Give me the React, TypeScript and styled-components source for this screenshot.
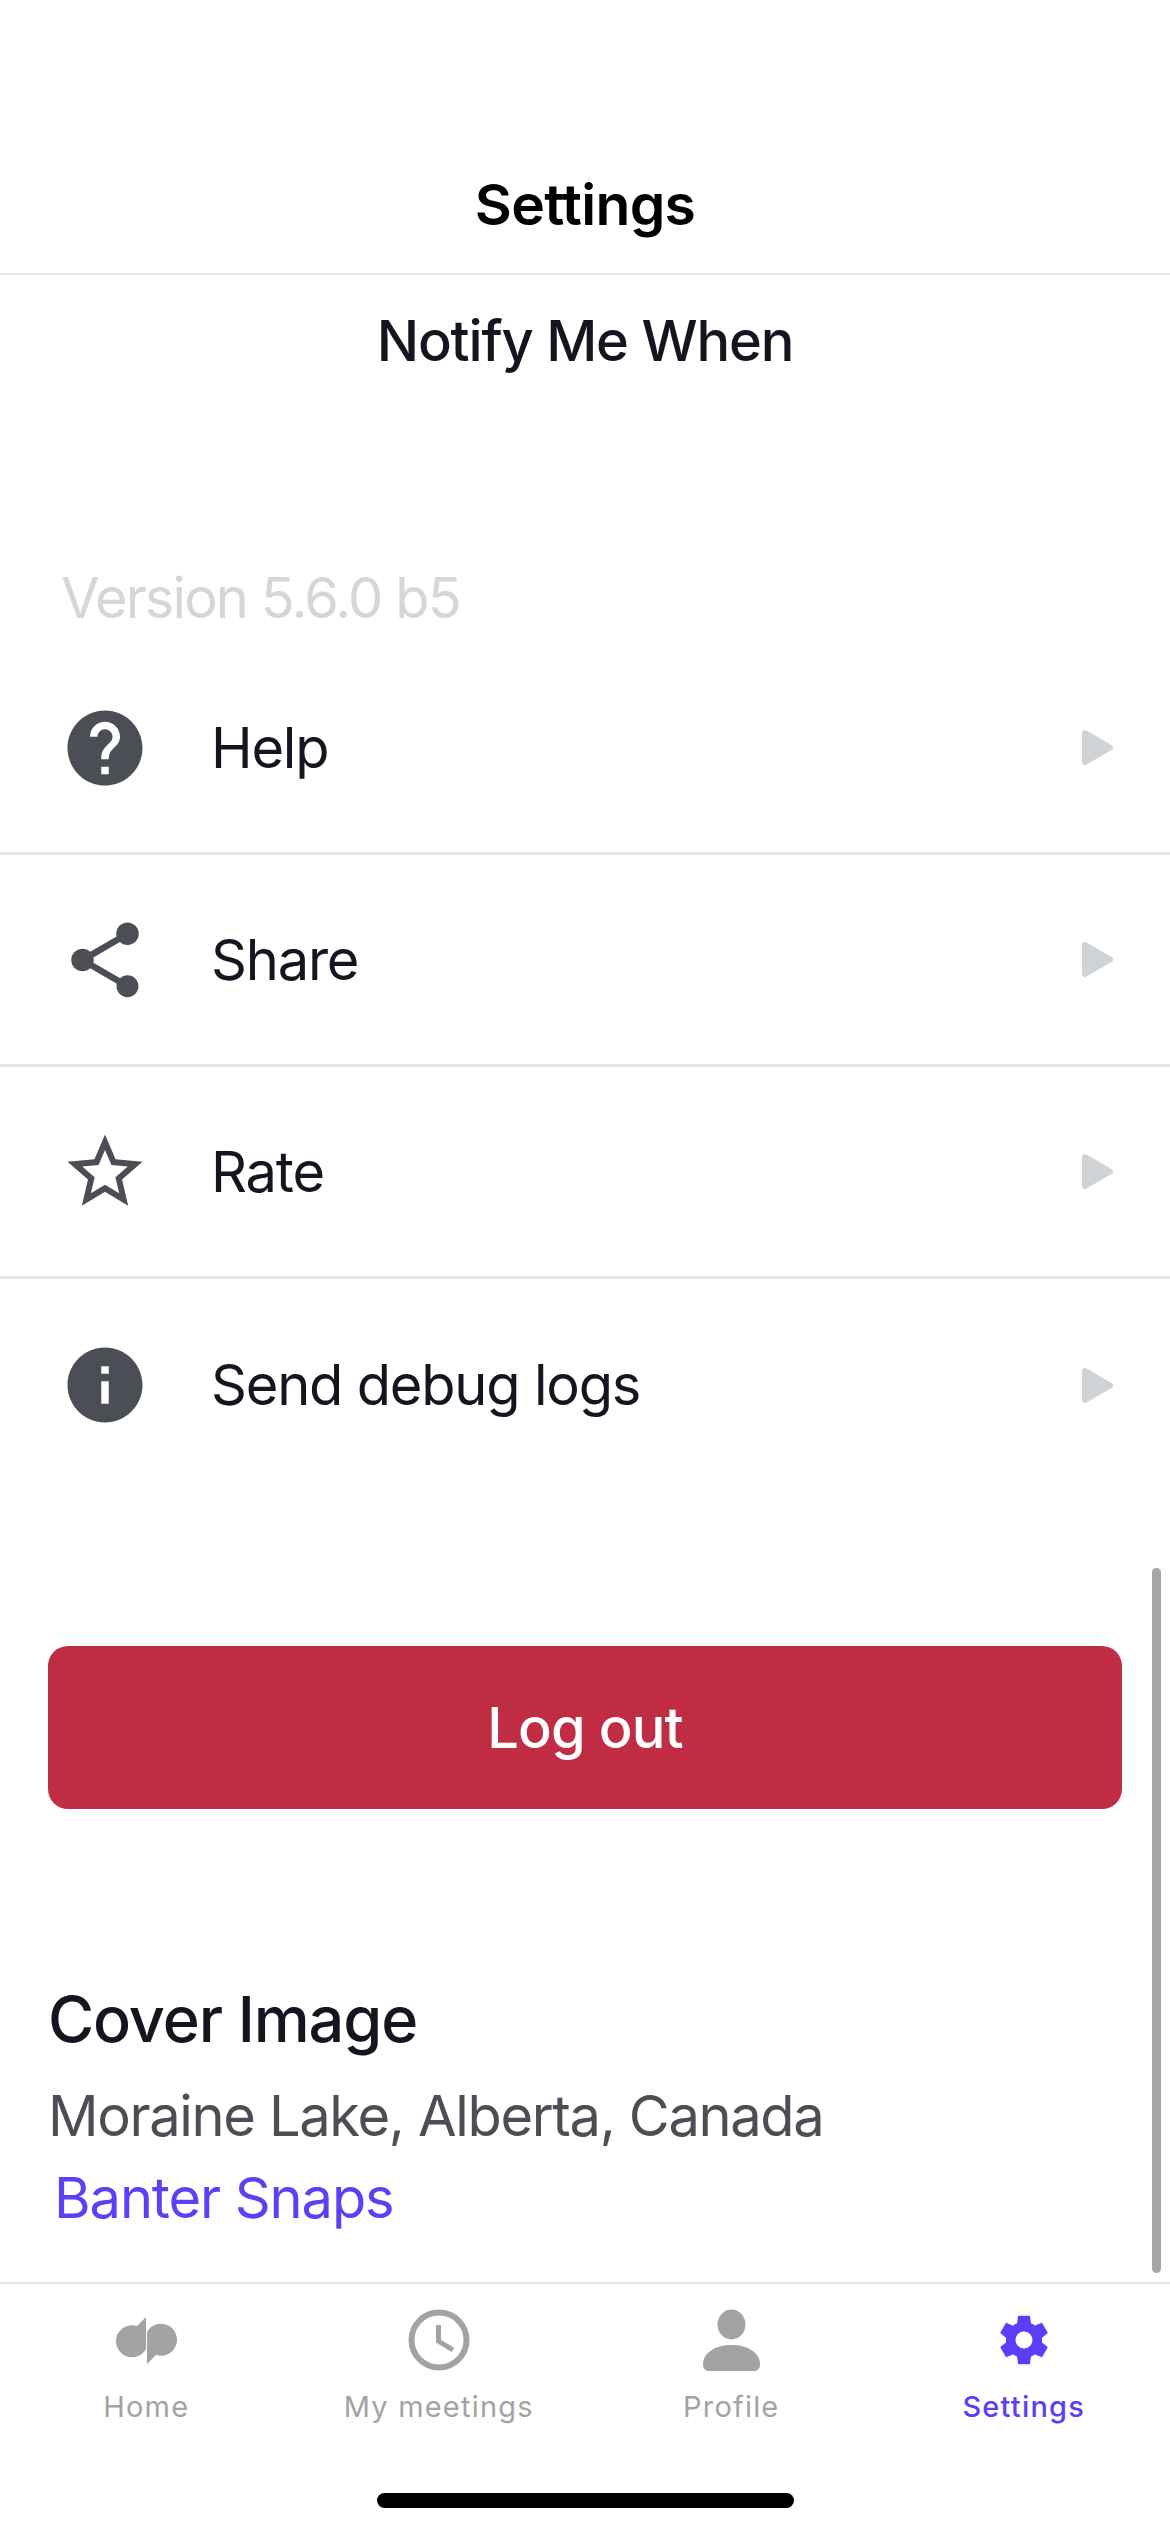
import styled, { createGlobalStyle } from "styled-components";

const GlobalStyle = createGlobalStyle`
  html, body {
    margin: 0;
    padding: 0;
    background: #fff;
  }
  body {
    font-family: Inter, "Liberation Sans", sans-serif;
  }
`;

const Screen = styled.div`
  position: relative;
  width: 1170px;
  height: 2532px;
  display: flex;
  flex-direction: column;
  overflow: hidden;
  background: #fff;
`;

const Header = styled.header`
  padding: 165px 0 28px;
  border-bottom: 2px solid #e6e6e6;
`;

const Title = styled.h1`
  margin: 0;
  font-size: 57px;
  line-height: 80px;
  font-weight: 600;
  letter-spacing: -0.7px;
  text-align: center;
  color: #000;
`;

const Content = styled.main`
  position: relative;
  flex: 1;
`;

const ScrollThumb = styled.div`
  position: absolute;
  top: 1293px;
  right: 9px;
  width: 9px;
  height: 705px;
  border-radius: 5px;
  background: #a5a5a5;
`;

const SectionTitle = styled.h2`
  margin: 26px 0 0;
  font-size: 56px;
  line-height: 80px;
  font-weight: 500;
  letter-spacing: -1.2px;
  text-align: center;
  color: #14161f;
`;

const Version = styled.div`
  margin: 177px 0 5px;
  padding-left: 61px;
  font-size: 56px;
  line-height: 80px;
  letter-spacing: -1.9px;
  color: #d6d6d6;
`;

const Row = styled.div`
  height: 212px;
  box-sizing: border-box;
  display: flex;
  align-items: center;
  padding: 0 57px 0 60px;
  border-bottom: 3px solid #e5e5ea;

  &:last-child {
    border-bottom: none;
  }
`;

const RowIcon = styled.svg`
  width: 90px;
  height: 90px;
  fill: #4b4e55;
  flex-shrink: 0;
`;

const RowLabel = styled.span`
  margin-left: 61px;
  font-size: 56px;
  letter-spacing: -1.2px;
  color: #14161f;
`;

const Chevron = styled.svg`
  width: 31px;
  height: 35px;
  margin-left: auto;
  fill: #cfd3d5;
  stroke: #cfd3d5;
  stroke-width: 6;
  stroke-linejoin: round;
`;

const LogoutButton = styled.button`
  display: block;
  width: 1074px;
  height: 163px;
  margin: 155px 48px 0;
  border: none;
  border-radius: 20px;
  background: #c02c44;
  color: #fff;
  font-family: inherit;
  font-size: 56px;
  font-weight: 500;
  letter-spacing: -0.9px;
`;

const Credits = styled.section`
  padding: 166px 0 0 48px;
`;

const CreditsTitle = styled.h3`
  margin: 0 0 13px;
  font-size: 63px;
  line-height: 88px;
  font-weight: 500;
  letter-spacing: -1.1px;
  color: #14161f;
`;

const CreditsLine = styled.div`
  font-size: 56px;
  line-height: 80px;
  letter-spacing: -1.35px;
  color: #4b4e55;
`;

const CreditsLink = styled.a`
  display: block;
  margin: 2px 0 0 6px;
  font-size: 56px;
  line-height: 80px;
  letter-spacing: -1.1px;
  color: #5f3ff6;
`;

const TabBar = styled.nav`
  height: 250px;
  box-sizing: border-box;
  border-top: 2px solid #e6e6e6;
  padding-top: 25px;
`;

const Tabs = styled.div`
  display: grid;
  grid-template-columns: repeat(4, 1fr);
`;

const Tab = styled.div<{ $active?: boolean }>`
  display: flex;
  flex-direction: column;
  align-items: center;
  color: ${({ $active }) => ($active ? "#5b3ef5" : "#a3a3a3")};
`;

const TabIcon = styled.div`
  height: 62px;
  display: flex;
  align-items: center;
  justify-content: center;
  margin-bottom: 16px;

  svg {
    display: block;
    fill: currentColor;
  }
`;

const TabLabel = styled.span<{ $active?: boolean }>`
  font-size: 29px;
  line-height: 40px;
  letter-spacing: 1.2px;
  font-weight: ${({ $active }) => ($active ? 500 : 400)};
`;

const HomeIndicator = styled.div`
  width: 417px;
  height: 15px;
  margin: 66px auto 0;
  border-radius: 8px;
  background: #000;
`;

const rows = [
  {
    label: "Help",
    icon: "M12 2C6.48 2 2 6.48 2 12s4.48 10 10 10 10-4.48 10-10S17.52 2 12 2zm1 17h-2v-2h2v2zm2.07-7.75l-.9.92C13.45 12.9 13 13.5 13 15h-2v-.5c0-1.1.45-2.1 1.17-2.83l1.24-1.26c.37-.36.59-.86.59-1.41 0-1.1-.9-2-2-2s-2 .9-2 2H8c0-2.21 1.79-4 4-4s4 1.79 4 4c0 .88-.36 1.68-.93 2.25z",
  },
  {
    label: "Share",
    icon: "M18 16.08c-.76 0-1.44.3-1.96.77L8.91 12.7c.05-.23.09-.46.09-.7s-.04-.47-.09-.7l7.05-4.11c.54.5 1.25.81 2.04.81 1.66 0 3-1.34 3-3s-1.34-3-3-3-3 1.34-3 3c0 .24.04.47.09.7L8.04 9.81C7.5 9.31 6.79 9 6 9c-1.66 0-3 1.34-3 3s1.34 3 3 3c.79 0 1.5-.31 2.04-.81l7.12 4.16c-.05.21-.08.43-.08.65 0 1.61 1.31 2.92 2.92 2.92 1.61 0 2.92-1.31 2.92-2.92s-1.31-2.92-2.92-2.92z",
  },
  {
    label: "Rate",
    icon: "M22 9.24l-7.19-.62L12 2 9.19 8.63 2 9.24l5.46 4.73L5.82 21 12 17.27 18.18 21l-1.63-7.03L22 9.24zM12 15.4l-3.76 2.27 1-4.28-3.32-2.88 4.38-.38L12 6.1l1.71 4.04 4.38.38-3.32 2.88 1 4.28L12 15.4z",
  },
  {
    label: "Send debug logs",
    icon: "M12 2C6.48 2 2 6.48 2 12s4.48 10 10 10 10-4.48 10-10S17.52 2 12 2zm1 15h-2v-6h2v6zm0-8h-2V7h2v2z",
  },
];

const HomeGlyph = () => (
  <svg width="61" height="47" viewBox="0 0 61 47">
    <path d="M30 0L30 32A16 16 0 1 1 21 9Z" />
    <path d="M31 47L31 15A16 16 0 1 1 40 38Z" />
  </svg>
);

const ClockGlyph = () => (
  <svg width="62" height="62" viewBox="0 0 62 62" style={{ fill: "none" }}>
    <circle cx="31" cy="31" r="27.5" stroke="currentColor" strokeWidth="6" />
    <path d="M30.5 16V32L45 41" stroke="currentColor" strokeWidth="5" />
  </svg>
);

const PersonGlyph = () => (
  <svg width="57" height="62" viewBox="0 0 57 62">
    <ellipse cx="28.5" cy="15.5" rx="14" ry="15" />
    <path d="M0 55C0 44 12 36 28.5 36C45 36 57 44 57 55Q57 62 51 62H6Q0 62 0 55Z" />
  </svg>
);

const GearGlyph = () => (
  <svg width="58" height="58" viewBox="0 0 24 24">
    <path d="M19.44 12.99l-.01.02c.04-.33.08-.67.08-1.01 0-.34-.03-.66-.07-.99l.01.02 2.44-1.92-2.43-4.22-2.87 1.16.01.01c-.52-.4-1.09-.74-1.71-1h.01L14.44 2H9.57l-.44 3.07h.01c-.62.26-1.19.6-1.71 1l.01-.01-2.88-1.17-2.44 4.22 2.44 1.92.01-.02c-.04.33-.07.65-.07.99 0 .34.03.68.08 1.01l-.01-.02-2.1 1.65-.33.26 2.43 4.2 2.88-1.15-.02-.04c.53.41 1.1.75 1.73 1.01h-.03L9.58 22h4.85s.03-.18.06-.42l.38-2.65h-.01c.62-.26 1.2-.6 1.73-1.01l-.02.04 2.88 1.15 2.43-4.2s-.14-.12-.33-.26l-2.11-1.66zM12 15.5c-1.93 0-3.5-1.57-3.5-3.5s1.57-3.5 3.5-3.5 3.5 1.57 3.5 3.5-1.57 3.5-3.5 3.5z" />
  </svg>
);

const tabs = [
  { label: "Home", glyph: <HomeGlyph /> },
  { label: "My meetings", glyph: <ClockGlyph /> },
  { label: "Profile", glyph: <PersonGlyph /> },
  { label: "Settings", glyph: <GearGlyph />, active: true },
];

export default function App() {
  return (
    <Screen>
      <GlobalStyle />
      <Header>
        <Title>Settings</Title>
      </Header>
      <Content>
        <SectionTitle>Notify Me When</SectionTitle>
        <Version>Version 5.6.0 b5</Version>
        <div>
          {rows.map((row) => (
            <Row key={row.label}>
              <RowIcon viewBox="0 0 24 24">
                <path d={row.icon} />
              </RowIcon>
              <RowLabel>{row.label}</RowLabel>
              <Chevron viewBox="0 0 31 35">
                <polygon points="3,3 28,17.5 3,32" />
              </Chevron>
            </Row>
          ))}
        </div>
        <LogoutButton>Log out</LogoutButton>
        <Credits>
          <CreditsTitle>Cover Image</CreditsTitle>
          <CreditsLine>Moraine Lake, Alberta, Canada</CreditsLine>
          <CreditsLink>Banter Snaps</CreditsLink>
        </Credits>
        <ScrollThumb />
      </Content>
      <TabBar>
        <Tabs>
          {tabs.map((tab) => (
            <Tab key={tab.label} $active={tab.active}>
              <TabIcon>{tab.glyph}</TabIcon>
              <TabLabel $active={tab.active}>{tab.label}</TabLabel>
            </Tab>
          ))}
        </Tabs>
        <HomeIndicator />
      </TabBar>
    </Screen>
  );
}
